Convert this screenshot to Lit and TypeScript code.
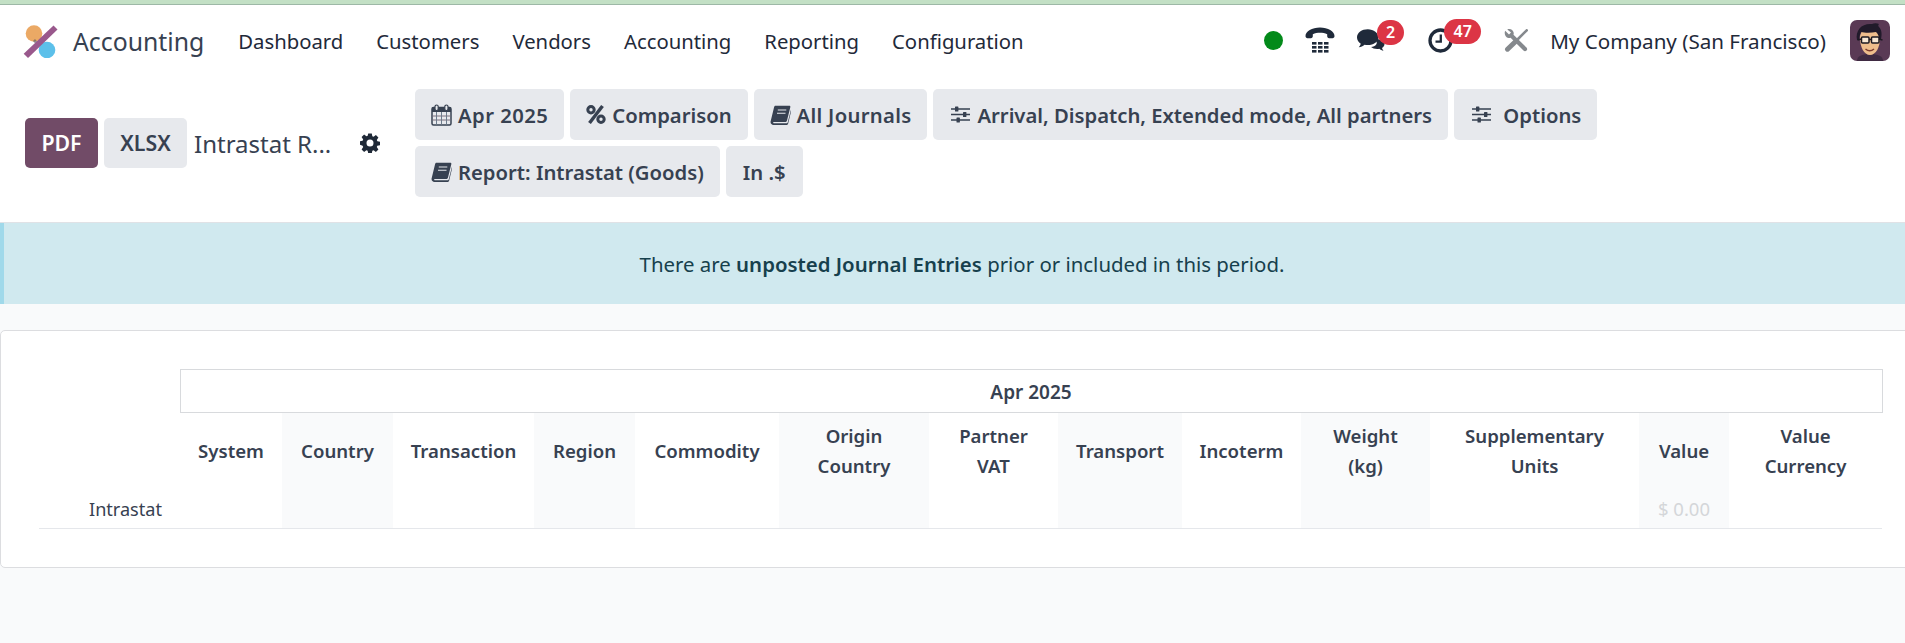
import { LitElement, html, css } from "lit";
import { customElement } from "lit/decorators.js";

const ink = "#374151";
const dark = "#1f2a3a";
const grey = "#85898d";

const calendar = html`<svg class="ic" viewBox="0 0 21 22" width="21" height="22">
  <rect x="1" y="3.500" width="19" height="17.500" rx="1.500" fill="#e7e9ed" stroke="${ink}" stroke-width="1.500"/>
  <rect x="1" y="3.500" width="19" height="4.500" fill="${ink}"/>
  <path d="M1.500 12h18M1.500 16h18" stroke="#7a6f7c" stroke-width="1" fill="none"/>
  <path d="M5.500 8v12.500M10.500 8v12.500M15.500 8v12.500" stroke="#6d7c8c" stroke-width="1" fill="none"/>
  <rect x="4" y="1" width="3.200" height="5.500" rx="1.600" fill="#e7e9ed" stroke="${ink}" stroke-width="1.200"/>
  <rect x="13.800" y="1" width="3.200" height="5.500" rx="1.600" fill="#e7e9ed" stroke="${ink}" stroke-width="1.200"/>
</svg>`;
const percent = html`<svg class="ic" viewBox="0 0 20 19" width="20" height="19">
  <circle cx="5" cy="4.800" r="3.200" fill="none" stroke="${ink}" stroke-width="3"/>
  <circle cx="15" cy="14.200" r="3.200" fill="none" stroke="${ink}" stroke-width="3"/>
  <path d="M16.500 1 3.500 18" stroke="${ink}" stroke-width="3.400" fill="none"/>
</svg>`;
const book = html`<svg class="ic" viewBox="0 0 21 20" width="21" height="20">
  <path d="M5.500.8h13.700c.9 0 1.300.6 1.100 1.400l-3.300 13.400c-.3 1-1 1.500-2 1.500H4c-1.100 0-1.300 1-.3 1.200h12.800c.6 0 1-.3 1.200-.9L21 4.800l.4.4-3.300 13.500c-.2.900-1 1.300-2 1.300H3.500C1.600 19.900.2 18.400.6 16.400L4 2.400C4.200 1.500 4.700.8 5.500.8z" fill="${ink}"/>
  <path d="M7.800 5h8.500M7 8.300h8.500" stroke="#e7e9ed" stroke-width="1.100" fill="none"/>
</svg>`;
const sliders = html`<svg class="ic sl" viewBox="0 0 19 17" width="19" height="17">
  <path d="M0 3h19M0 8.500h19M0 14h19" stroke="${ink}" stroke-width="1.500" fill="none"/>
  <rect x="4" y=".5" width="3.400" height="5" rx=".6" fill="${ink}"/>
  <rect x="12" y="6" width="3.400" height="5" rx=".6" fill="${ink}"/>
  <rect x="5.500" y="11.500" width="3.400" height="5" rx=".6" fill="${ink}"/>
</svg>`;
const gear = html`<svg class="gear" viewBox="0 0 20 20" width="20" height="20">
  <path fill="#1f2937" fill-rule="evenodd" d="M8.200.5h3.600l.5 2.700 1.300.5 2.300-1.600 2.500 2.500-1.600 2.300.6 1.300 2.600.5v3.600l-2.700.5-.5 1.300 1.600 2.300-2.500 2.500-2.300-1.600-1.300.5-.5 2.700H8.200l-.5-2.700-1.300-.5-2.300 1.600-2.500-2.500 1.600-2.300-.6-1.300L0 11.800V8.200l2.600-.5.6-1.300L1.600 4.100l2.500-2.500 2.300 1.600 1.300-.5zM10 6.500a3.500 3.500 0 1 0 0 7 3.500 3.500 0 0 0 0-7z"/>
</svg>`;
const logo = html`<svg class="logo" viewBox="0 0 35 33" width="35" height="33">
  <circle cx="11" cy="8.500" r="8.300" fill="#eba965"/>
  <circle cx="24" cy="25" r="8.300" fill="#5cc0ea"/>
  <path d="M12 14l5 6-2 2-5-6z" fill="#3f4b57" opacity=".55"/>
  <path d="M30.500.5 34.500 4.600 5 33 .7 28.800z" fill="#99588c"/>
</svg>`;
const phone = html`<svg viewBox="0 0 30 26" width="30" height="26">
  <path d="M.5 9C.5 4.500 7 .5 15 .5S29.500 4.500 29.500 9c0 1.400-.8 2.200-1.900 2.200h-3.500c-1.200 0-1.900-.8-1.900-1.900V7.200C20 6.300 17.600 5.800 15 5.800s-5 .5-7.200 1.400v2.100c0 1.100-.7 1.900-1.900 1.900H2.400C1.300 11.200.5 10.400.5 9z" fill="${dark}"/>
  <g fill="${dark}">
    <rect x="7" y="15" width="4.500" height="2.600"/><rect x="13" y="15" width="4.500" height="2.600"/><rect x="19" y="15" width="4.500" height="2.600"/>
    <rect x="7" y="19" width="4.500" height="2.600"/><rect x="13" y="19" width="4.500" height="2.600"/><rect x="19" y="19" width="4.500" height="2.600"/>
    <rect x="7" y="23" width="4.500" height="2.600"/><rect x="13" y="23" width="4.500" height="2.600"/><rect x="19" y="23" width="4.500" height="2.600"/>
  </g>
</svg>`;
const chat = html`<svg viewBox="0 0 28 22" width="28" height="22">
  <path d="M18 10c4.500 0 9.500 1.500 9.500 5 0 1.700-1 3-2.500 4 .3 1 .8 1.900 1.500 2.700-1.600 0-3-.8-4.200-1.900-.7.200-1.400.3-2.100.3-2.600 0-4.800-.8-6.100-2C18.600 17.600 22 14.500 18 10z" fill="${dark}"/>
  <path d="M10.800.2C4.800.2 0 3.700 0 8.500c0 2.600 1.500 4.800 3.800 6.200-.3 1.300-1 2.400-2 3.600 2.100-.1 4.100-1 5.700-2.500 1 .2 2.100.3 3.300.3 6 0 10.700-3.400 10.700-7.600S16.800.2 10.800.2z" fill="${dark}"/>
</svg>`;
const clock = html`<svg viewBox="0 0 25 25" width="25" height="25">
  <circle cx="12.500" cy="12.500" r="10.500" fill="none" stroke="${dark}" stroke-width="3.300"/>
  <path d="M12.800 6.500v7.200H7.500" fill="none" stroke="${dark}" stroke-width="2.300"/>
</svg>`;
const tools = html`<svg viewBox="0 0 24 23" width="24" height="23">
  <path d="M1.200 1.700 5 5.400l2-2L3.300.4C6-.8 9.200.8 9.700 3.800c.1.700 0 1.400-.2 2l13 12.800c.9.900.9 2.200 0 3-.9.900-2.100.9-3 0L6.600 8.700c-.7.200-1.400.3-2.100.2C1.500 8.400-.2 4.600 1.200 1.700z" fill="${grey}"/>
  <path d="M22.700 1.300 14 10" stroke="${grey}" stroke-width="2.600" fill="none" stroke-linecap="round"/>
  <path d="M10.800 13.200 3.500 20.200" stroke="${grey}" stroke-width="5" fill="none" stroke-linecap="round"/>
</svg>`;
const avatar = html`<svg class="avatar" viewBox="0 0 40 41" width="40" height="41">
  <rect width="40" height="41" rx="7" fill="#5a3a55"/>
  <path d="M7 41c0-5 5-7 13-7s13 2 13 7z" fill="#3f2a42"/>
  <path d="M10 18c0-7 4-9 10-9s10 2 10 9c0 9-4 17-10 17S10 27 10 18z" fill="#eebd8c"/>
  <path d="M7 20C5 10 12 3 22 4c2-1 5-1 7 0-1 1-1 2 0 3 3 3 3 8 2 12l-2 1c0-4-1-6-3-8-5 1-11 1-15 0-1 3-2 5-2 8z" fill="#211a2a"/>
  <rect x="11.500" y="17" width="7.500" height="6" rx="1" fill="#f8e8d4" stroke="#1d1a22" stroke-width="1.500"/>
  <rect x="21.500" y="17" width="7.500" height="6" rx="1" fill="#f8e8d4" stroke="#1d1a22" stroke-width="1.500"/>
  <path d="M19 19.500h2.500M7.500 20l4-1M29 19l3.500 1" stroke="#1d1a22" stroke-width="1.500"/>
  <path d="M15.500 29c2.500 2 6 2 8.500 0" stroke="#7b3b2d" stroke-width="1.500" fill="none"/>
</svg>`;

const columns: [string[], number, boolean][] = [
  [["System"], 102, false],
  [["Country"], 111, true],
  [["Transaction"], 141, false],
  [["Region"], 101, true],
  [["Commodity"], 144, false],
  [["Origin", "Country"], 150, true],
  [["Partner", "VAT"], 129, false],
  [["Transport"], 124, true],
  [["Incoterm"], 119, false],
  [["Weight", "(kg)"], 129, true],
  [["Supplementary", "Units"], 209, false],
  [["Value"], 90, true],
  [["Value", "Currency"], 153, false],
];

@customElement("app-root")
export class AppRoot extends LitElement {
  static styles = css`
    :host {
      display: block;
      width: 1905px;
      height: 643px;
      overflow: hidden;
      background: #f9fafb;
      color: #374151;
      font-family: "Noto Sans", sans-serif;
      font-size: 18px;
      line-height: 30px;
    }
    .topline { height: 4px; background: #c3e0c5; border-bottom: 1px solid #9db8a6; }
    .nav {
      height: 71px;
      background: #fff;
      display: flex;
      align-items: center;
      padding: 0 15px 0 23px;
      box-sizing: border-box;
      color: #1f2a3a;
    }
    .logo { margin-right: 15px; margin-top: 1px; }
    .brand { font-size: 24.800px; color: #374151; margin-right: 34px; margin-top: 1px; }
    .menu { display: flex; gap: 33px; font-size: 20.300px; margin-top: 1px; }
    .systray { margin-left: auto; display: flex; align-items: center; margin-top: -1px; }
    .dot { width: 19px; height: 19px; border-radius: 50%; background: #038a1a; margin-right: 22px; }
    .tray { position: relative; display: flex; }
    .badge {
      position: absolute;
      top: -9px;
      height: 25px;
      min-width: 27px;
      padding: 0 5px;
      box-sizing: border-box;
      border-radius: 13px;
      background: #dc3545;
      color: #fff;
      font-size: 16px;
      font-weight: 600;
      line-height: 25px;
      text-align: center;
    }
    .phone { margin-right: 22px; }
    .chat { margin-right: 43px; }
    .chat .badge { left: 20px; }
    .clock { margin-right: 51px; }
    .clock .badge { left: 16px; min-width: 37px; }
    .tools { margin-right: 22px; }
    .company { font-size: 20.600px; margin-right: 24px; margin-top: 2px; }
    .avatar { display: block; }

    .panel {
      background: #fff;
      height: 147px;
      box-sizing: border-box;
      border-bottom: 1px solid #e0e2e6;
      display: flex;
      align-items: center;
      padding: 0 0 12px 25px;
    }
    .left { display: flex; align-items: center; margin-right: 35px; }
    .btn {
      background: #e7e9ed;
      color: #374151;
      border-radius: 5px;
      font-weight: 600;
      font-size: 20.250px;
      display: inline-flex;
      align-items: center;
      justify-content: center;
      box-sizing: border-box;
    }
    .pdf { background: #714b67; color: #fff; width: 73px; height: 50px; margin-right: 6px; font-size: 21.300px; }
    .xlsx { width: 83px; height: 50px; margin-right: 7px; font-size: 21.300px; }
    .title { font-size: 24px; width: 166px; margin-top: 2px; }
    .gear { display: block; }
    .filters { display: flex; flex-wrap: wrap; gap: 6px; width: 1200px; }
    .filters .btn { height: 51px; gap: 6px; padding: 0 16px; }
    .filters .sl { margin-left: 2px; margin-right: 1px; }
    .filters .plain { padding: 0 17px; }
    .filters .wide { letter-spacing: .45px; }
    .filters .wider { letter-spacing: .3px; }
    .ic { display: block; flex: none; }

    .alert {
      height: 81px;
      background: #d0e9ef;
      border-left: 4px solid #a0d9ea;
      box-sizing: border-box;
      display: flex;
      align-items: center;
      justify-content: center;
      color: #16404d;
      font-size: 20.400px;
      padding-left: 15px;
    }
    .alert b { font-weight: 600; }

    .card {
      margin: 26px -6px 0 0;
      height: 238px;
      box-sizing: border-box;
      background: #fff;
      border: 1px solid #dcdde0;
      border-radius: 5px;
      padding: 38px 28px 0 38px;
    }
    table { border-collapse: collapse; table-layout: fixed; width: 1843px; }
    th, td { padding: 0; text-align: center; }
    th { font-weight: 600; font-size: 18.600px; color: #374151; vertical-align: middle; height: 76px; }
    .period th { border: 1px solid #d8dadd; height: 40px; padding-top: 2px; font-size: 19px; }
    .first { width: 141px; }
    .shade { background: #f9fafb; }
    .period .empty { border: 0; }
    tbody td { height: 39px; border-bottom: 1px solid #e5e7eb; font-size: 18.100px; }
    .name { text-align: right; padding-right: 18px; }
    .muted { color: #d4d6d9; font-size: 18.500px; }
  `;

  render() {
    return html`
      <div class="topline"></div>
      <header class="nav">
        ${logo}
        <span class="brand">Accounting</span>
        <nav class="menu">
          <span>Dashboard</span><span>Customers</span><span>Vendors</span>
          <span>Accounting</span><span>Reporting</span><span>Configuration</span>
        </nav>
        <div class="systray">
          <span class="dot"></span>
          <span class="tray phone">${phone}</span>
          <span class="tray chat">${chat}<span class="badge">2</span></span>
          <span class="tray clock">${clock}<span class="badge">47</span></span>
          <span class="tray tools">${tools}</span>
          <span class="company">My Company (San Francisco)</span>
          ${avatar}
        </div>
      </header>
      <section class="panel">
        <div class="left">
          <span class="btn pdf">PDF</span>
          <span class="btn xlsx">XLSX</span>
          <span class="title">Intrastat R...</span>
          ${gear}
        </div>
        <div class="filters">
          <span class="btn wide">${calendar}Apr 2025</span>
          <span class="btn">${percent}Comparison</span>
          <span class="btn wider">${book}All Journals</span>
          <span class="btn">${sliders}Arrival, Dispatch, Extended mode, All partners</span>
          <span class="btn">${sliders}&nbsp;Options</span>
          <span class="btn">${book}Report: Intrastat (Goods)</span>
          <span class="btn plain">In .$</span>
        </div>
      </section>
      <div class="alert"><span>There are <b>unposted Journal Entries</b> prior or included in this period.</span></div>
      <section class="card">
        <table>
          <colgroup>
            <col class="first" />
            ${columns.map((c) => html`<col style="width:${c[1]}px" />`)}
          </colgroup>
          <thead>
            <tr class="period"><th class="empty"></th><th colspan="13">Apr 2025</th></tr>
            <tr>
              <th></th>
              ${columns.map((c) => html`<th class=${c[2] ? "shade" : ""}>${c[0].map((l, i) => html`${i ? html`<br />` : ""}${l}`)}</th>`)}
            </tr>
          </thead>
          <tbody>
            <tr>
              <td class="name">Intrastat</td>
              ${columns.map((c) => html`<td class="${c[2] ? "shade" : ""} ${c[0][0] === "Value" && c[2] ? "muted" : ""}">${c[0][0] === "Value" && c[2] ? "$ 0.00" : ""}</td>`)}
            </tr>
          </tbody>
        </table>
      </section>
    `;
  }
}
